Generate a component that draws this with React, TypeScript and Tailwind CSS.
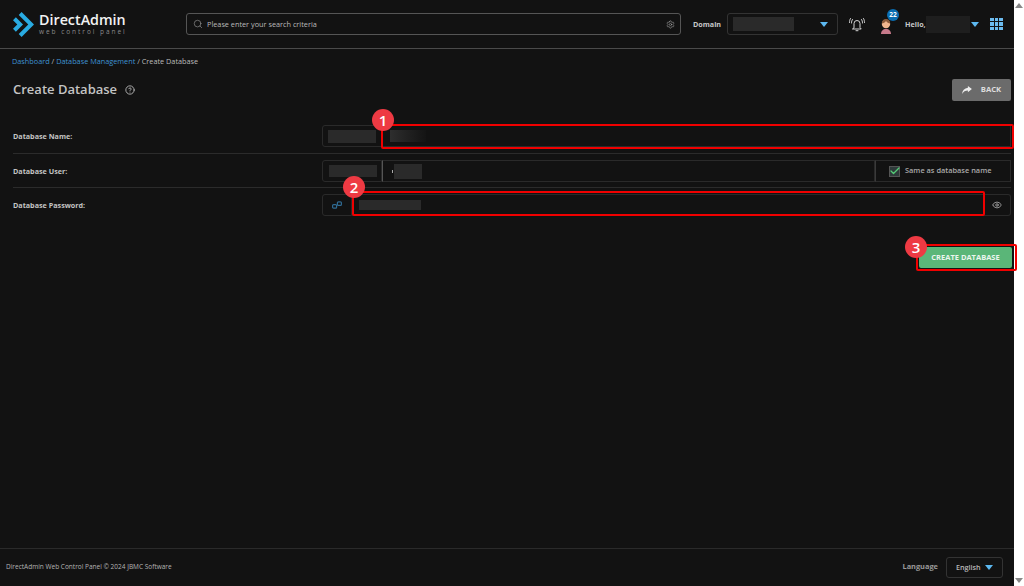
import React from 'react';
import { Search, Settings, Eye, CircleHelp, Check } from 'lucide-react';

const Caret = () => (
  <svg width="8" height="5" viewBox="0 0 8 5" className="shrink-0">
    <path d="M0 0h8L4 5z" fill="#5cb8f0" />
  </svg>
);

const Blur = ({ className }: { className: string }) => <div className={`bg-[#2a2a2a] ${className}`} />;

const Badge = ({ n, className }: { n: number; className: string }) => (
  <div className={`absolute w-[22px] h-[22px] rounded-full bg-[#ee3a43] text-white text-[15px] leading-[22px] text-center font-semibold ${className}`}>
    {n}
  </div>
);

const Logo = () => (
  <svg width="21" height="25" viewBox="0 0 22 26" className="shrink-0">
    <path d="M0 8.500 4.500 13 0 17.500 3 20.500 10.500 13 3 5.500z" fill="#29abe2" />
    <path d="M6 3 9 0 22 13 9 26 6 23 16 13z" fill="#29abe2" />
  </svg>
);

const Bell = () => (
  <svg width="16" height="15" viewBox="0 0 16 15" fill="none" stroke="#d4d4d4" strokeWidth="1" strokeLinecap="round" className="shrink-0">
    <path d="M5 10.500V6.500a3 3 0 0 1 6 0v4l1.200 1.500H3.800z" />
    <path d="M7 13.700h2" />
    <path d="M3.500 2.500C2.800 3.500 2.500 4.500 2.500 6M1.500 1.500C.8 2.500.5 4 .5 5.500" />
    <path d="M12.500 2.500c.7 1 1 2 1 3.500M14.500 1.500c.7 1 1 2.500 1 4" />
  </svg>
);

const Avatar = () => (
  <svg width="12" height="16" viewBox="0 0 12 16">
    <path d="M1 16c0-3 2-5 5-5s5 2 5 5z" fill="#c77a8a" />
    <circle cx="6" cy="6" r="4.200" fill="#f0b58d" />
    <path d="M1.800 5.500C1.800 2.500 3.500 1 6 1s4.200 1.500 4.200 4.500C8.500 5.500 7 4.500 6 3 5 4.500 3.500 5.500 1.800 5.500z" fill="#8a5a3a" />
  </svg>
);

// solid curved arrow on the back button
const BackArrow = () => (
  <svg width="10" height="8" viewBox="0 0 11 9" className="shrink-0">
    <path d="M6.500 0 11 3.500 6.500 7V5C3.500 5 1.500 6 0 9c.3-4 2.500-6.500 6.500-7z" fill="#eee" />
  </svg>
);

const KeyLink = () => (
  <svg width="10" height="8" viewBox="0 0 10 8" fill="none" stroke="#2f6a92" strokeWidth="1.200" className="shrink-0">
    <rect x="0.600" y="3.600" width="4" height="3.600" rx="1" />
    <rect x="5.400" y="0.800" width="4" height="3.600" rx="1" />
  </svg>
);

const Row = ({ label, children }: { label: string; children: React.ReactNode }) => (
  <div className="flex items-center h-[22px]">
    <div className="w-[309px] text-[7.200px] font-bold text-[#c4c4c4]">{label}</div>
    <div className="flex-1 flex h-[22px]">{children}</div>
  </div>
);

export default function App() {
  return (
    <div className="flex h-[586px] w-[1024px] overflow-hidden bg-[#121212] font-['Open_Sans',sans-serif] text-[#c8c8c8]">
      <div className="flex-1 flex flex-col min-w-0">
        {/* header */}
        <header className="h-[49px] shrink-0 border-b border-[#4a4a4a] flex items-center">
          <div className="w-[186px] pl-[13px] flex items-center gap-[5px] shrink-0">
            <Logo />
            <div>
              <div className="text-[14.300px] font-semibold text-[#f2f2f2] leading-[13px]">DirectAdmin</div>
              <div className="mt-[2px] text-[6.500px] text-[#8a8a8a] tracking-[1.950px] leading-[7px]">web control panel</div>
            </div>
          </div>
          <div className="w-[495px] h-[22px] shrink-0 border border-[#555] rounded-[3px] flex items-center pl-[6px] pr-[5px] gap-[4px]">
            <Search size={10} strokeWidth={1.5} className="text-[#999]" />
            <span className="flex-1 text-[7.300px] text-[#bbb]">Please enter your search criteria</span>
            <Settings size={9} strokeWidth={1.5} className="text-[#aaa]" />
          </div>
          <div className="ml-[12px] w-[28px] text-[7.200px] font-bold text-[#c8c8c8]">Domain</div>
          <div className="ml-[6px] w-[111px] h-[22px] shrink-0 border border-[#333] rounded-[3px] flex items-center pl-[5px] pr-[9px] justify-between">
            <Blur className="w-[61px] h-[14px]" />
            <Caret />
          </div>
          <div className="ml-[11px]"><Bell /></div>
          <div className="relative ml-[15px] w-[12px] h-[16px] mt-[3px] shrink-0">
            <Avatar />
            <div className="absolute -top-[9px] left-[7px] w-[12px] h-[12px] rounded-full bg-[#0b6db0] text-[6.500px] font-bold text-white text-center leading-[12px]">22</div>
          </div>
          <div className="ml-[13px] w-[20px] text-[7.200px] font-bold text-[#c8c8c8]">Hello,</div>
          <Blur className="ml-[1px] w-[44px] h-[17px] !bg-[#1e1e1e]" />
          <div className="ml-[1px]"><Caret /></div>
          <div className="ml-[11px] grid grid-cols-3 gap-[1px]">
            {Array.from({ length: 9 }).map((_, i) => (
              <div key={i} className="w-[3.500px] h-[3.500px] bg-[#6cbcf0]" />
            ))}
          </div>
        </header>

        {/* breadcrumb */}
        <div className="pl-[12px] pt-[7px] text-[7.300px] leading-[11px] h-[18px]">
          <span className="text-[#3f92d2]">Dashboard</span>
          <span className="text-[#bbb]"> / </span>
          <span className="text-[#3f92d2]">Database Management</span>
          <span className="text-[#bbb]"> / Create Database</span>
        </div>

        {/* title */}
        <div className="flex items-center justify-between pl-[13px] pr-[3px] mt-[12px] h-[22px]">
          <div className="flex items-center gap-[8px]">
            <h1 className="text-[13px] font-semibold text-[#c4c4c4]">Create Database</h1>
            <CircleHelp size={10} strokeWidth={2} className="text-[#c4c4c4]" />
          </div>
          <button className="w-[59px] h-[22px] rounded-[2px] bg-[#6b6b6b] flex items-center justify-center gap-[9px] text-[7.700px] font-bold text-[#ddd]">
            <BackArrow />
            BACK
          </button>
        </div>

        {/* form */}
        <div className="relative pl-[13px] pr-[3px] mt-[24px]">
          <Row label="Database Name:">
            <div className="w-[60px] border border-[#2a2a2a] rounded-l-[3px] flex items-center pl-[5px]">
              <Blur className="w-[48px] h-[13px]" />
            </div>
            <div className="flex-1 border border-[#2a2a2a] flex items-center pl-[7px]">
              <div className="w-[36px] h-[12px] bg-gradient-to-r from-[#2e2e2e] to-[#141414]" />
            </div>
          </Row>
          <div className="h-px bg-[#2b2b2b] mt-[6px] mb-[6px]" />
          <Row label="Database User:">
            <div className="w-[60px] border border-[#2a2a2a] rounded-l-[3px] flex items-center pl-[6px]">
              <Blur className="w-[48px] h-[12px]" />
            </div>
            <div className="flex-1 border border-[#2a2a2a] border-l-[#555] flex items-center pl-[9px]">
              <div className="w-px h-[3px] bg-[#aaa] mr-px" />
              <Blur className="w-[28px] h-[15px]" />
            </div>
            <div className="w-[136px] border border-[#2a2a2a] border-l-[#3a3a3a] flex items-center pl-[13px] gap-[5px]">
              <div className="w-[11px] h-[11px] bg-[#2e3a3a] border border-[#555] flex items-center justify-center">
                <Check size={12} strokeWidth={2.5} className="text-[#55cc77] shrink-0" />
              </div>
              <span className="text-[7.400px] font-semibold text-[#aaa]">Same as database name</span>
            </div>
          </Row>
          <div className="h-px bg-[#2b2b2b] mt-[5px] mb-[6px]" />
          <Row label="Database Password:">
            <div className="w-[30px] border border-[#2a2a2a] rounded-l-[3px] flex items-center justify-center">
              <KeyLink />
            </div>
            <div className="flex-1 border border-[#2a2a2a] flex items-center pl-[6px]">
              <Blur className="w-[62px] h-[10px]" />
            </div>
            <div className="w-[27px] border border-[#2a2a2a] border-l-0 rounded-r-[3px] flex items-center justify-center">
              <Eye size={10} strokeWidth={2} className="text-[#aaa]" />
            </div>
          </Row>

          {/* annotations */}
          <div className="absolute left-[381px] right-[0px] -top-[1px] h-[25px] border-2 border-[#f00000] rounded-[2px]" />
          <Badge n={1} className="left-[372px] -top-[16px]" />
          <div className="absolute left-[352px] right-[29px] top-[66px] h-[25px] border-2 border-[#f00000] rounded-[2px]" />
          <Badge n={2} className="left-[343px] top-[51px]" />
        </div>

        {/* submit */}
        <div className="relative flex justify-end pr-[2px] mt-[31px]">
          <button className="w-[93px] h-[21px] rounded-[2px] bg-[#5ab678] text-[7.500px] font-bold text-[#eaf5ee]">CREATE DATABASE</button>
          <div className="absolute right-[-3px] -top-[3px] w-[101px] h-[27px] border-2 border-[#f00000] rounded-[2px]" />
          <Badge n={3} className="right-[87px] -top-[11px]" />
        </div>

        {/* footer */}
        <footer className="mt-auto h-[38px] border-t border-[#2a2a2a] flex items-center pl-[6px] pr-[11px] pb-[1px]">
          <span className="flex-1 text-[6.500px] text-[#b4b4b4]">DirectAdmin Web Control Panel © 2024 JBMC Software</span>
          <span className="text-[7.400px] font-bold text-[#999]">Language</span>
          <div className="ml-[8px] w-[57px] h-[21px] border border-[#333] rounded-[3px] flex items-center pl-[9px] gap-[4px] text-[7.200px] font-semibold text-[#b8b8b8]">
            English
            <Caret />
          </div>
        </footer>
      </div>

      {/* scrollbar */}
      <div className="w-[10px] shrink-0 bg-white flex flex-col justify-between items-center py-[3px]">
        <div className="w-0 h-0 border-x-[4px] border-x-transparent border-b-[5px] border-b-[#888]" />
        <div className="w-0 h-0 border-x-[4px] border-x-transparent border-t-[5px] border-t-[#888]" />
      </div>
    </div>
  );
}
